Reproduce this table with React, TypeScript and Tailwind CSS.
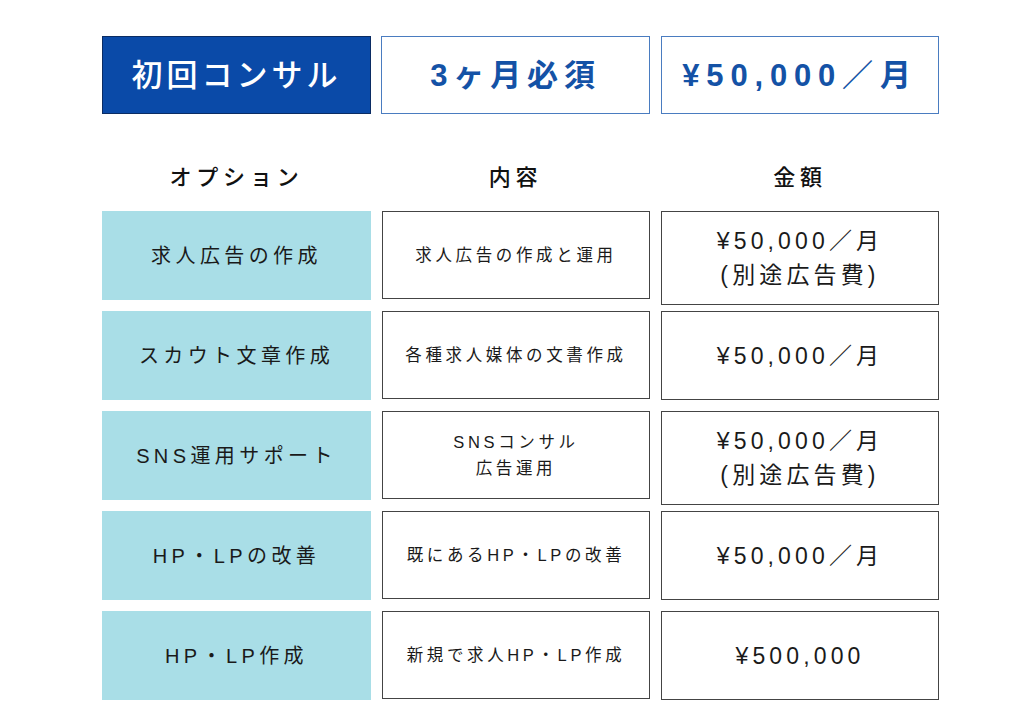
const font = "font-['Liberation_Sans','Noto_Sans_CJK_JP',sans-serif]";

type Row = { option: string; content: string[]; price: string[] };

const rows: Row[] = [
  { option: "求人広告の作成", content: ["求人広告の作成と運用"], price: ["¥50,000／月", "(別途広告費)"] },
  { option: "スカウト文章作成", content: ["各種求人媒体の文書作成"], price: ["¥50,000／月"] },
  { option: "SNS運用サポート", content: ["SNSコンサル", "広告運用"], price: ["¥50,000／月", "(別途広告費)"] },
  { option: "HP・LPの改善", content: ["既にあるHP・LPの改善"], price: ["¥50,000／月"] },
  { option: "HP・LP作成", content: ["新規で求人HP・LP作成"], price: ["¥500,000"] },
];

export default function App() {
  return (
    <div className={`${font} min-h-[723px] w-[1024px] bg-white text-[#1a1a1a]`}>
      <div className="ml-[102px] w-[837px] pt-[36px]">
        {/* top summary */}
        <div className="flex">
          <div className="flex h-[78px] w-[269px] items-center justify-center border-[1.5px] border-[#0b2c63] bg-[#0a4aa8] pt-[3px] text-[31px] font-medium tracking-[0.13em] text-white">
            初回コンサル
          </div>
          <div className="ml-[10px] flex h-[78px] w-[269px] items-center justify-center border border-[#4a7cc0] pt-[3px] text-[31px] font-bold tracking-[0.19em] text-[#1452a6]">
            3ヶ月必須
          </div>
          <div className="ml-[11px] flex h-[78px] w-[278px] items-center justify-center border border-[#4a7cc0] pt-[3px] text-[31px] font-bold tracking-[0.22em] text-[#1452a6]">
            ¥50,000／月
          </div>
        </div>

        {/* headers */}
        <div className="mt-[48px] flex h-[30px] items-center text-[22px] font-medium tracking-[0.22em] text-[#111]">
          <div className="w-[269px] text-center">オプション</div>
          <div className="ml-[10px] w-[269px] text-center">内容</div>
          <div className="ml-[11px] w-[278px] text-center">金額</div>
        </div>

        {/* option rows */}
        <div className="mt-[19px] flex flex-col gap-[11px]">
          {rows.map((r) => (
            <div key={r.option} className="flex h-[89px] items-start">
              <div className="flex h-[89px] w-[269px] items-center justify-center bg-[#a9dee7] text-[20px] font-normal tracking-[0.22em] text-[#1a1a1a]">
                {r.option}
              </div>
              <div className="ml-[11px] flex h-[88px] w-[268px] flex-col items-center justify-center border border-[#444] text-[16.5px] font-normal leading-[26px] tracking-[0.22em] text-[#1a1a1a]">
                {r.content.map((c) => (
                  <div key={c}>{c}</div>
                ))}
              </div>
              <div
                className={`ml-[11px] flex w-[278px] flex-col items-center justify-center border border-[#444] bg-white text-[23px] font-normal leading-[34px] tracking-[0.18em] text-[#1a1a1a] ${
                  r.price.length > 1 ? "h-[94px]" : "h-[89px]"
                }`}
              >
                {r.price.map((p) => (
                  <div key={p}>{p}</div>
                ))}
              </div>
            </div>
          ))}
        </div>
      </div>
    </div>
  );
}
